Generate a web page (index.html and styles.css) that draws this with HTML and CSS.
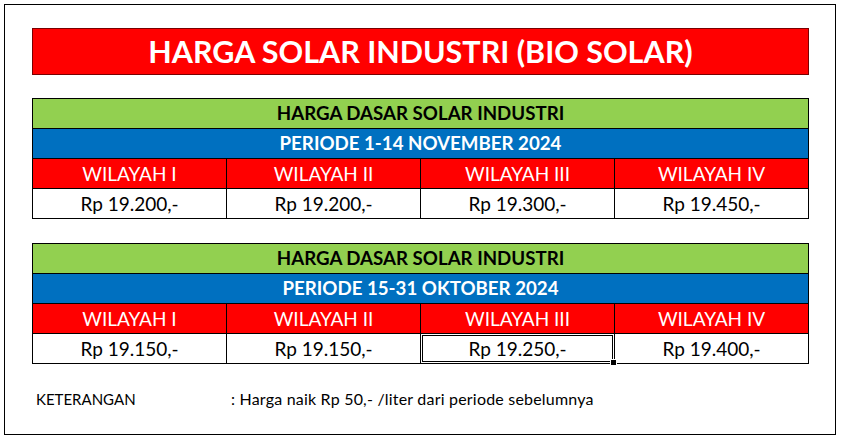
FILE: index.html
```html
<!DOCTYPE html>
<html lang="id">
<head>
<meta charset="utf-8">
<title>Harga Solar Industri</title>
<link rel="stylesheet" href="styles.css">
</head>
<body>
<div class="frame">
  <div class="title">HARGA SOLAR INDUSTRI (BIO SOLAR)</div>

  <table class="price">
    <tr><td colspan="4" class="head">HARGA DASAR SOLAR INDUSTRI</td></tr>
    <tr><td colspan="4" class="period">PERIODE 1-14 NOVEMBER 2024</td></tr>
    <tr class="region"><td>WILAYAH I</td><td>WILAYAH II</td><td>WILAYAH III</td><td>WILAYAH IV</td></tr>
    <tr class="value"><td>Rp 19.200,-</td><td>Rp 19.200,-</td><td>Rp 19.300,-</td><td>Rp 19.450,-</td></tr>
  </table>

  <table class="price">
    <tr><td colspan="4" class="head">HARGA DASAR SOLAR INDUSTRI</td></tr>
    <tr><td colspan="4" class="period">PERIODE 15-31 OKTOBER 2024</td></tr>
    <tr class="region"><td>WILAYAH I</td><td>WILAYAH II</td><td>WILAYAH III</td><td>WILAYAH IV</td></tr>
    <tr class="value"><td>Rp 19.150,-</td><td>Rp 19.150,-</td><td class="selected">Rp 19.250,-<span class="handle"></span></td><td>Rp 19.400,-</td></tr>
  </table>

  <div class="note">
    <span class="note-label">KETERANGAN</span>
    <span class="note-text">: Harga naik Rp 50,- /liter dari periode sebelumnya</span>
  </div>
</div>
</body>
</html>
```

FILE: styles.css
```css
html, body {
  margin: 0;
  padding: 0;
  background: #ffffff;
}

body {
  font-family: "Lato", "Open Sans", sans-serif;
}

.frame {
  margin: 4px 0 0 4px;
  width: 832px;
  height: 431px;
  box-sizing: border-box;
  border: 1px solid #000;
  padding: 23px 0 0 27px;
}

.title {
  width: 777px;
  height: 47px;
  box-sizing: border-box;
  background: #ff0000;
  border: 1px solid #7a0000;
  color: #fff;
  font-weight: bold;
  font-size: 30.5px;
  line-height: 45px;
  text-align: center;
}

.price {
  border-collapse: collapse;
  table-layout: fixed;
  width: 777px;
  margin-top: 23px;
}

.price + .price {
  margin-top: 24px;
}

.price td {
  border: 1px solid #000;
  height: 29px;
  padding: 0;
  text-align: center;
  font-size: 17px;
  line-height: 29px;
  width: 194px;
}

.price td.head {
  background: #92d050;
  font-weight: bold;
  color: #000;
  font-size: 18.7px;
}

.price td.period {
  background: #0070c0;
  color: #fff;
  font-weight: bold;
  font-size: 18.7px;
}

.region td {
  background: #ff0000;
  color: #fff;
  font-size: 19px;
}

.value td {
  background: #fff;
  color: #000;
  font-size: 19px;
}

.value td.selected {
  position: relative;
  box-shadow: inset 0 0 0 1px #fff, inset 0 0 0 2px #000;
}

.handle {
  position: absolute;
  right: -3px;
  bottom: -3px;
  width: 5px;
  height: 5px;
  background: #000;
  border: 1px solid #fff;
}

.note {
  display: flex;
  align-items: baseline;
  margin-top: 25px;
  padding-left: 4px;
  color: #000;
}

.note-label {
  width: 195px;
  font-size: 15px;
  line-height: 19px;
}

.note-text {
  font-size: 16px;
  line-height: 19px;
  letter-spacing: 0.2px;
}
```
